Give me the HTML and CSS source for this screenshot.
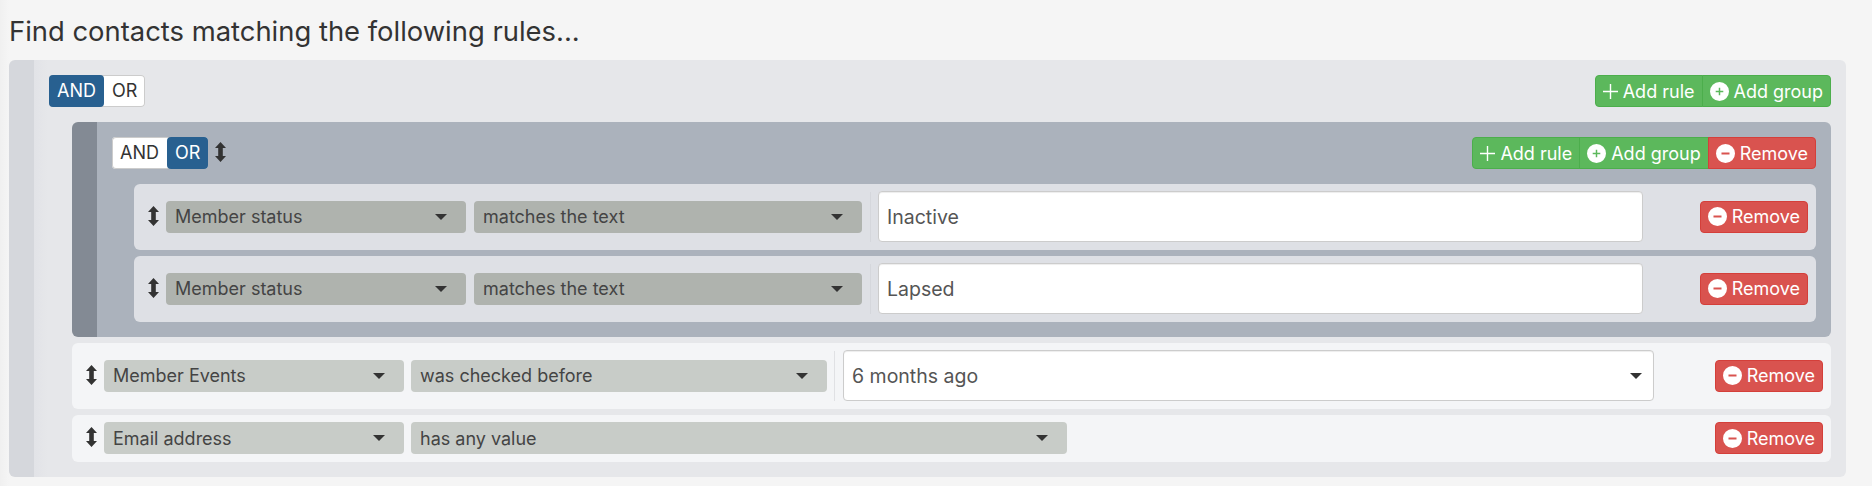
FILE: index.html
```html
<!DOCTYPE html>
<html lang="en">
<head>
    <meta charset="UTF-8">
    <title>Find contacts</title>
    <link rel="stylesheet" href="styles.css">
</head>
<body>
    <svg class="defs" width="0" height="0">
        <symbol id="i-drag" viewBox="0 0 11 20"><path d="M5.5 0 L11 6 H7.8 V14 H11 L5.5 20 L0 14 H3.2 V6 H0 Z"/></symbol>
        <symbol id="i-plus" viewBox="0 0 15 15"><path d="M6.8 0 H8.2 V6.8 H15 V8.2 H8.2 V15 H6.8 V8.2 H0 V6.8 H6.8 Z"/></symbol>
        <symbol id="i-circle-plus" viewBox="0 0 18 18"><path fill-rule="evenodd" d="M9 0 A9 9 0 1 1 9 18 A9 9 0 1 1 9 0 Z M8.3 5.4 V8.3 H5.4 V9.7 H8.3 V12.6 H9.7 V9.7 H12.6 V8.3 H9.7 V5.4 Z"/></symbol>
        <symbol id="i-circle-minus" viewBox="0 0 18 18"><path fill-rule="evenodd" d="M9 0 A9 9 0 1 1 9 18 A9 9 0 1 1 9 0 Z M5.2 8.1 V9.9 H12.8 V8.1 Z"/></symbol>
    </svg>

    <h1 class="title">Find contacts matching the following rules...</h1>

    <div class="group group-outer">
        <div class="group-head">
            <div class="toggle">
                <span class="toggle-btn active">AND</span>
                <span class="toggle-btn">OR</span>
            </div>
            <div class="actions">
                <span class="btn btn-add"><svg class="icon-plus"><use href="#i-plus"/></svg>Add rule</span>
                <span class="btn btn-add"><svg class="icon-circle"><use href="#i-circle-plus"/></svg>Add group</span>
            </div>
        </div>

        <div class="group-body">
            <div class="group group-inner">
                <div class="group-head">
                    <div class="toggle">
                        <span class="toggle-btn">AND</span>
                        <span class="toggle-btn active">OR</span>
                    </div>
                    <svg class="drag drag-head"><use href="#i-drag"/></svg>
                    <div class="actions">
                        <span class="btn btn-add"><svg class="icon-plus"><use href="#i-plus"/></svg>Add rule</span>
                        <span class="btn btn-add"><svg class="icon-circle"><use href="#i-circle-plus"/></svg>Add group</span>
                        <span class="btn btn-remove"><svg class="icon-circle"><use href="#i-circle-minus"/></svg>Remove</span>
                    </div>
                </div>

                <div class="group-body">
                    <div class="rule rule-nested">
                        <svg class="drag"><use href="#i-drag"/></svg>
                        <div class="pick pick-field"><span>Member status</span><i class="caret"></i></div>
                        <div class="pick pick-op-nested"><span>matches the text</span><i class="caret"></i></div>
                        <div class="sep"></div>
                        <input class="value value-nested" type="text" value="Inactive">
                        <span class="btn btn-remove btn-end"><svg class="icon-circle"><use href="#i-circle-minus"/></svg>Remove</span>
                    </div>
                    <div class="rule rule-nested">
                        <svg class="drag"><use href="#i-drag"/></svg>
                        <div class="pick pick-field"><span>Member status</span><i class="caret"></i></div>
                        <div class="pick pick-op-nested"><span>matches the text</span><i class="caret"></i></div>
                        <div class="sep"></div>
                        <input class="value value-nested" type="text" value="Lapsed">
                        <span class="btn btn-remove btn-end"><svg class="icon-circle"><use href="#i-circle-minus"/></svg>Remove</span>
                    </div>
                </div>
            </div>

            <div class="rule">
                <svg class="drag"><use href="#i-drag"/></svg>
                <div class="pick pick-field"><span>Member Events</span><i class="caret"></i></div>
                <div class="pick pick-op"><span>was checked before</span><i class="caret"></i></div>
                <div class="sep sep-wide"></div>
                <div class="value value-select"><span>6 months ago</span><i class="caret"></i></div>
                <span class="btn btn-remove btn-end"><svg class="icon-circle"><use href="#i-circle-minus"/></svg>Remove</span>
            </div>
            <div class="rule rule-short">
                <svg class="drag"><use href="#i-drag"/></svg>
                <div class="pick pick-field"><span>Email address</span><i class="caret"></i></div>
                <div class="pick pick-op-long"><span>has any value</span><i class="caret"></i></div>
                <span class="btn btn-remove btn-end"><svg class="icon-circle"><use href="#i-circle-minus"/></svg>Remove</span>
            </div>
        </div>
    </div>
</body>
</html>
```

FILE: styles.css
```css
* {
    box-sizing: border-box;
}
body {
    margin: 0;
    padding: 0 26px 0 9px;
    background: linear-gradient(90deg, #f0f0f0, #f5f5f5 9px);
    color: #333;
    font-family: Inter, "Liberation Sans", sans-serif;
    font-size: 18px;
}
.defs {
    position: absolute;
}
.title {
    margin: 0;
    height: 60px;
    padding-top: 13px;
    font-size: 27.4px;
    font-weight: 400;
    line-height: 36px;
}

/* groups */
.group {
    border-left: 25px solid;
    border-radius: 6px;
    padding: 15px;
}
.group-outer {
    height: 417px;
    background: linear-gradient(90deg, #e2e3e7, #e6e7ea 14px);
    border-left-color: #d5d7dc;
}
.group-inner {
    background-color: #abb2bc;
    border-left-color: #838a94;
}
.group-head {
    display: flex;
    align-items: center;
    height: 32px;
    margin-bottom: 15px;
}
.group-body {
    display: flex;
    flex-direction: column;
    gap: 6px;
    margin-left: 23px;
}
.group-inner .group-body {
    margin-left: 22px;
}

/* and / or */
.toggle {
    display: flex;
    height: 32px;
    border-radius: 4px;
    background-color: #fff;
    box-shadow: 0 0 0 1px #ccc inset;
}
.toggle-btn {
    padding: 0 8px;
    line-height: 32px;
    border-radius: 4px;
}
.toggle-btn.active {
    background-color: #286090;
    color: #fff;
}

/* buttons */
.actions {
    display: flex;
    margin-left: auto;
}
.btn {
    display: flex;
    align-items: center;
    gap: 5px;
    height: 32px;
    padding: 0 7px;
    border: 1px solid;
    border-radius: 4px;
    color: #fff;
    white-space: nowrap;
}
.btn-add {
    background-color: #5cb85c;
    border-color: #4cae4c;
}
.btn-remove {
    background-color: #d9534f;
    border-color: #d43f3a;
}
.actions .btn {
    margin-left: -1px;
    border-radius: 0;
}
.actions .btn:first-child {
    border-radius: 4px 0 0 4px;
}
.actions .btn:last-child {
    border-radius: 0 4px 4px 0;
}
.btn-end {
    margin-left: auto;
}
.icon-plus {
    width: 15px;
    height: 15px;
    fill: #fff;
}
.icon-circle {
    width: 19px;
    height: 19px;
    fill: #fff;
}

/* rules */
.rule {
    display: flex;
    align-items: center;
    height: 66px;
    padding: 7px 8px 8px 14px;
    border-radius: 6px;
    background-color: #f4f5f7;
}
.rule-nested {
    background-color: #dee0e5;
}
.rule-short {
    height: 47px;
}
.drag {
    width: 11px;
    height: 20px;
    margin-right: 7px;
    margin-top: -2px;
    fill: #333;
    flex: none;
}
.drag-head {
    margin: -2px 0 0 7px;
}
.pick {
    display: flex;
    align-items: center;
    justify-content: space-between;
    height: 32px;
    padding: 0 19px 0 9px;
    margin-right: 7px;
    border-radius: 4px;
    background-color: #c8ccc8;
    color: #444;
    flex: none;
}
.rule-nested .pick {
    background-color: #afb3ae;
    margin-right: 8px;
}
.pick-field {
    width: 300px;
}
.pick-op-nested {
    width: 388px;
}
.pick-op {
    width: 416px;
}
.pick-op-long {
    width: 656px;
}
.caret {
    width: 0;
    height: 0;
    border-style: solid;
    border-width: 6px 6px 0;
    border-color: #333 transparent transparent;
}
.sep {
    width: 1px;
    height: 50px;
    background-color: #d5d7dc;
    flex: none;
}
.sep-wide {
    background-color: #e0e1e4;
}
.value {
    height: 51px;
    margin-left: 7px;
    padding: 0 8px;
    border: 1px solid #ccc;
    border-radius: 4px;
    background-color: #fff;
    box-shadow: inset 0 1px 1px rgba(0, 0, 0, .075);
    color: #555;
    font-family: inherit;
    font-size: 19.5px;
    flex: none;
}
.value-nested {
    width: 765px;
}
.value-select {
    display: flex;
    align-items: center;
    justify-content: space-between;
    width: 811px;
    padding-right: 11px;
    margin-left: 8px;
}
```
